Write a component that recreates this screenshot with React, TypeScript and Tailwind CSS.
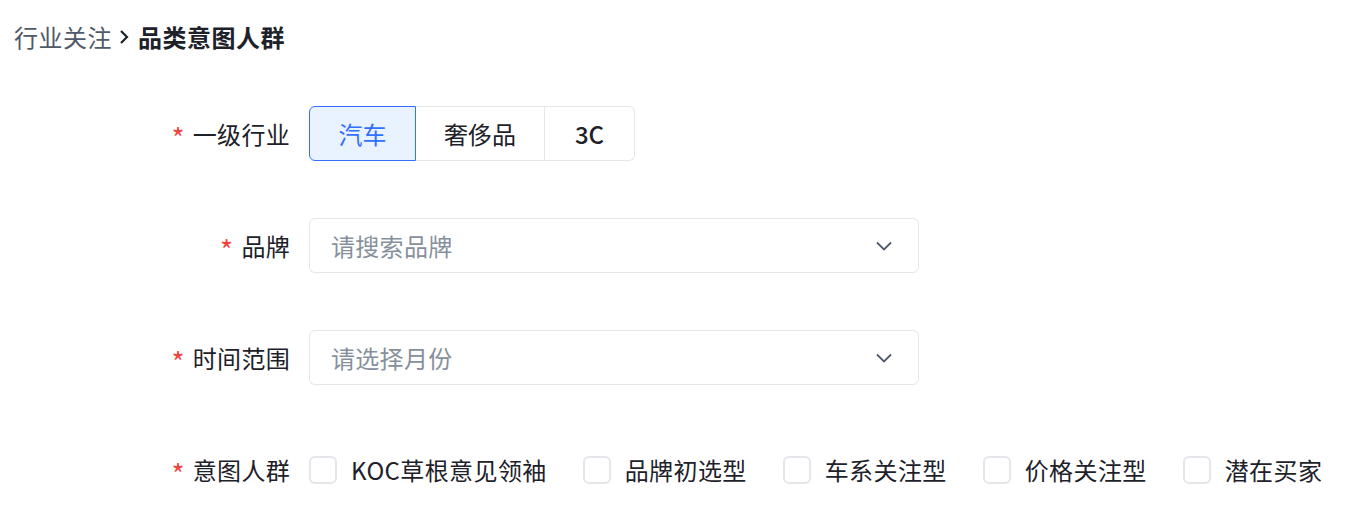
import React from 'react';

const font = { fontFamily: '"Noto Sans CJK SC", "Noto Sans", sans-serif' };

export default function App() {
  return (
    <div className="w-[1354px] h-[522px] bg-white text-[#1d2129] overflow-hidden" style={font}>
      {/* Breadcrumb */}
      <div className="flex items-center pl-[14px] pt-[20px] h-[54px] text-[24px] leading-[32px] tracking-[0.5px]">
        <span className="text-[#4e5969]">行业关注</span>
        <svg className="ml-[5px] mr-[7px] w-[14px] h-[16px] text-[#1d2129]" viewBox="0 0 14 16" fill="none">
          <path d="M4 2l6 6-6 6" stroke="currentColor" strokeWidth="2.2" />
        </svg>
        <span className="font-bold">品类意图人群</span>
      </div>

      <div className="mt-[52px]">
        <FormRow label="一级行业">
          <div className="flex h-[55px] text-[24px]">
            <button className="w-[107px] rounded-l-[6px] border border-[#3370ff] bg-[#e8f3ff] text-[#3370ff]">
              汽车
            </button>
            <button className="w-[129px] border-y border-r border-[#e5e6eb]">奢侈品</button>
            <button className="w-[90px] rounded-r-[6px] border-y border-r border-[#e5e6eb] font-medium">3C</button>
          </div>
        </FormRow>

        <FormRow label="品牌">
          <Select placeholder="请搜索品牌" />
        </FormRow>

        <FormRow label="时间范围">
          <Select placeholder="请选择月份" />
        </FormRow>

        <div className="mt-[2px]">
          <FormRow label="意图人群">
            <div className="flex items-center text-[24px] tracking-[0.4px]">
              <Check label="KOC草根意见领袖" />
              <Check label="品牌初选型" />
              <Check label="车系关注型" />
              <Check label="价格关注型" />
              <Check label="潜在买家" />
            </div>
          </FormRow>
        </div>
      </div>
    </div>
  );
}

function FormRow({ label, children }: { label: string; children: React.ReactNode }) {
  return (
    <div className="flex items-center h-[55px] mb-[57px]">
      <div className="w-[290px] flex items-center justify-end text-[24px] tracking-[0.3px]">
        <span className="text-[#f53f3f] text-[28px] leading-none mr-[8px] mt-[6px]">*</span>
        {label}
      </div>
      <div className="ml-[19px]">{children}</div>
    </div>
  );
}

function Select({ placeholder }: { placeholder: string }) {
  return (
    <div className="flex items-center justify-between w-[610px] h-[55px] pl-[21px] pr-[24px] border border-[#e5e6eb] rounded-[6px]">
      <span className="text-[24px] tracking-[0.3px] text-[#86909c]">{placeholder}</span>
      <svg className="w-[20px] h-[20px] text-[#4e5969]" viewBox="0 0 20 20" fill="none">
        <path d="M3 6.5l7 7 7-7" stroke="currentColor" strokeWidth="1.8" />
      </svg>
    </div>
  );
}

function Check({ label }: { label: string }) {
  return (
    <label className="flex items-center mr-[36px] last:mr-0">
      <span className="w-[28px] h-[28px] rounded-[6px] border-2 border-[#e5e6eb] bg-white" />
      <span className="ml-[14px]">{label}</span>
    </label>
  );
}
